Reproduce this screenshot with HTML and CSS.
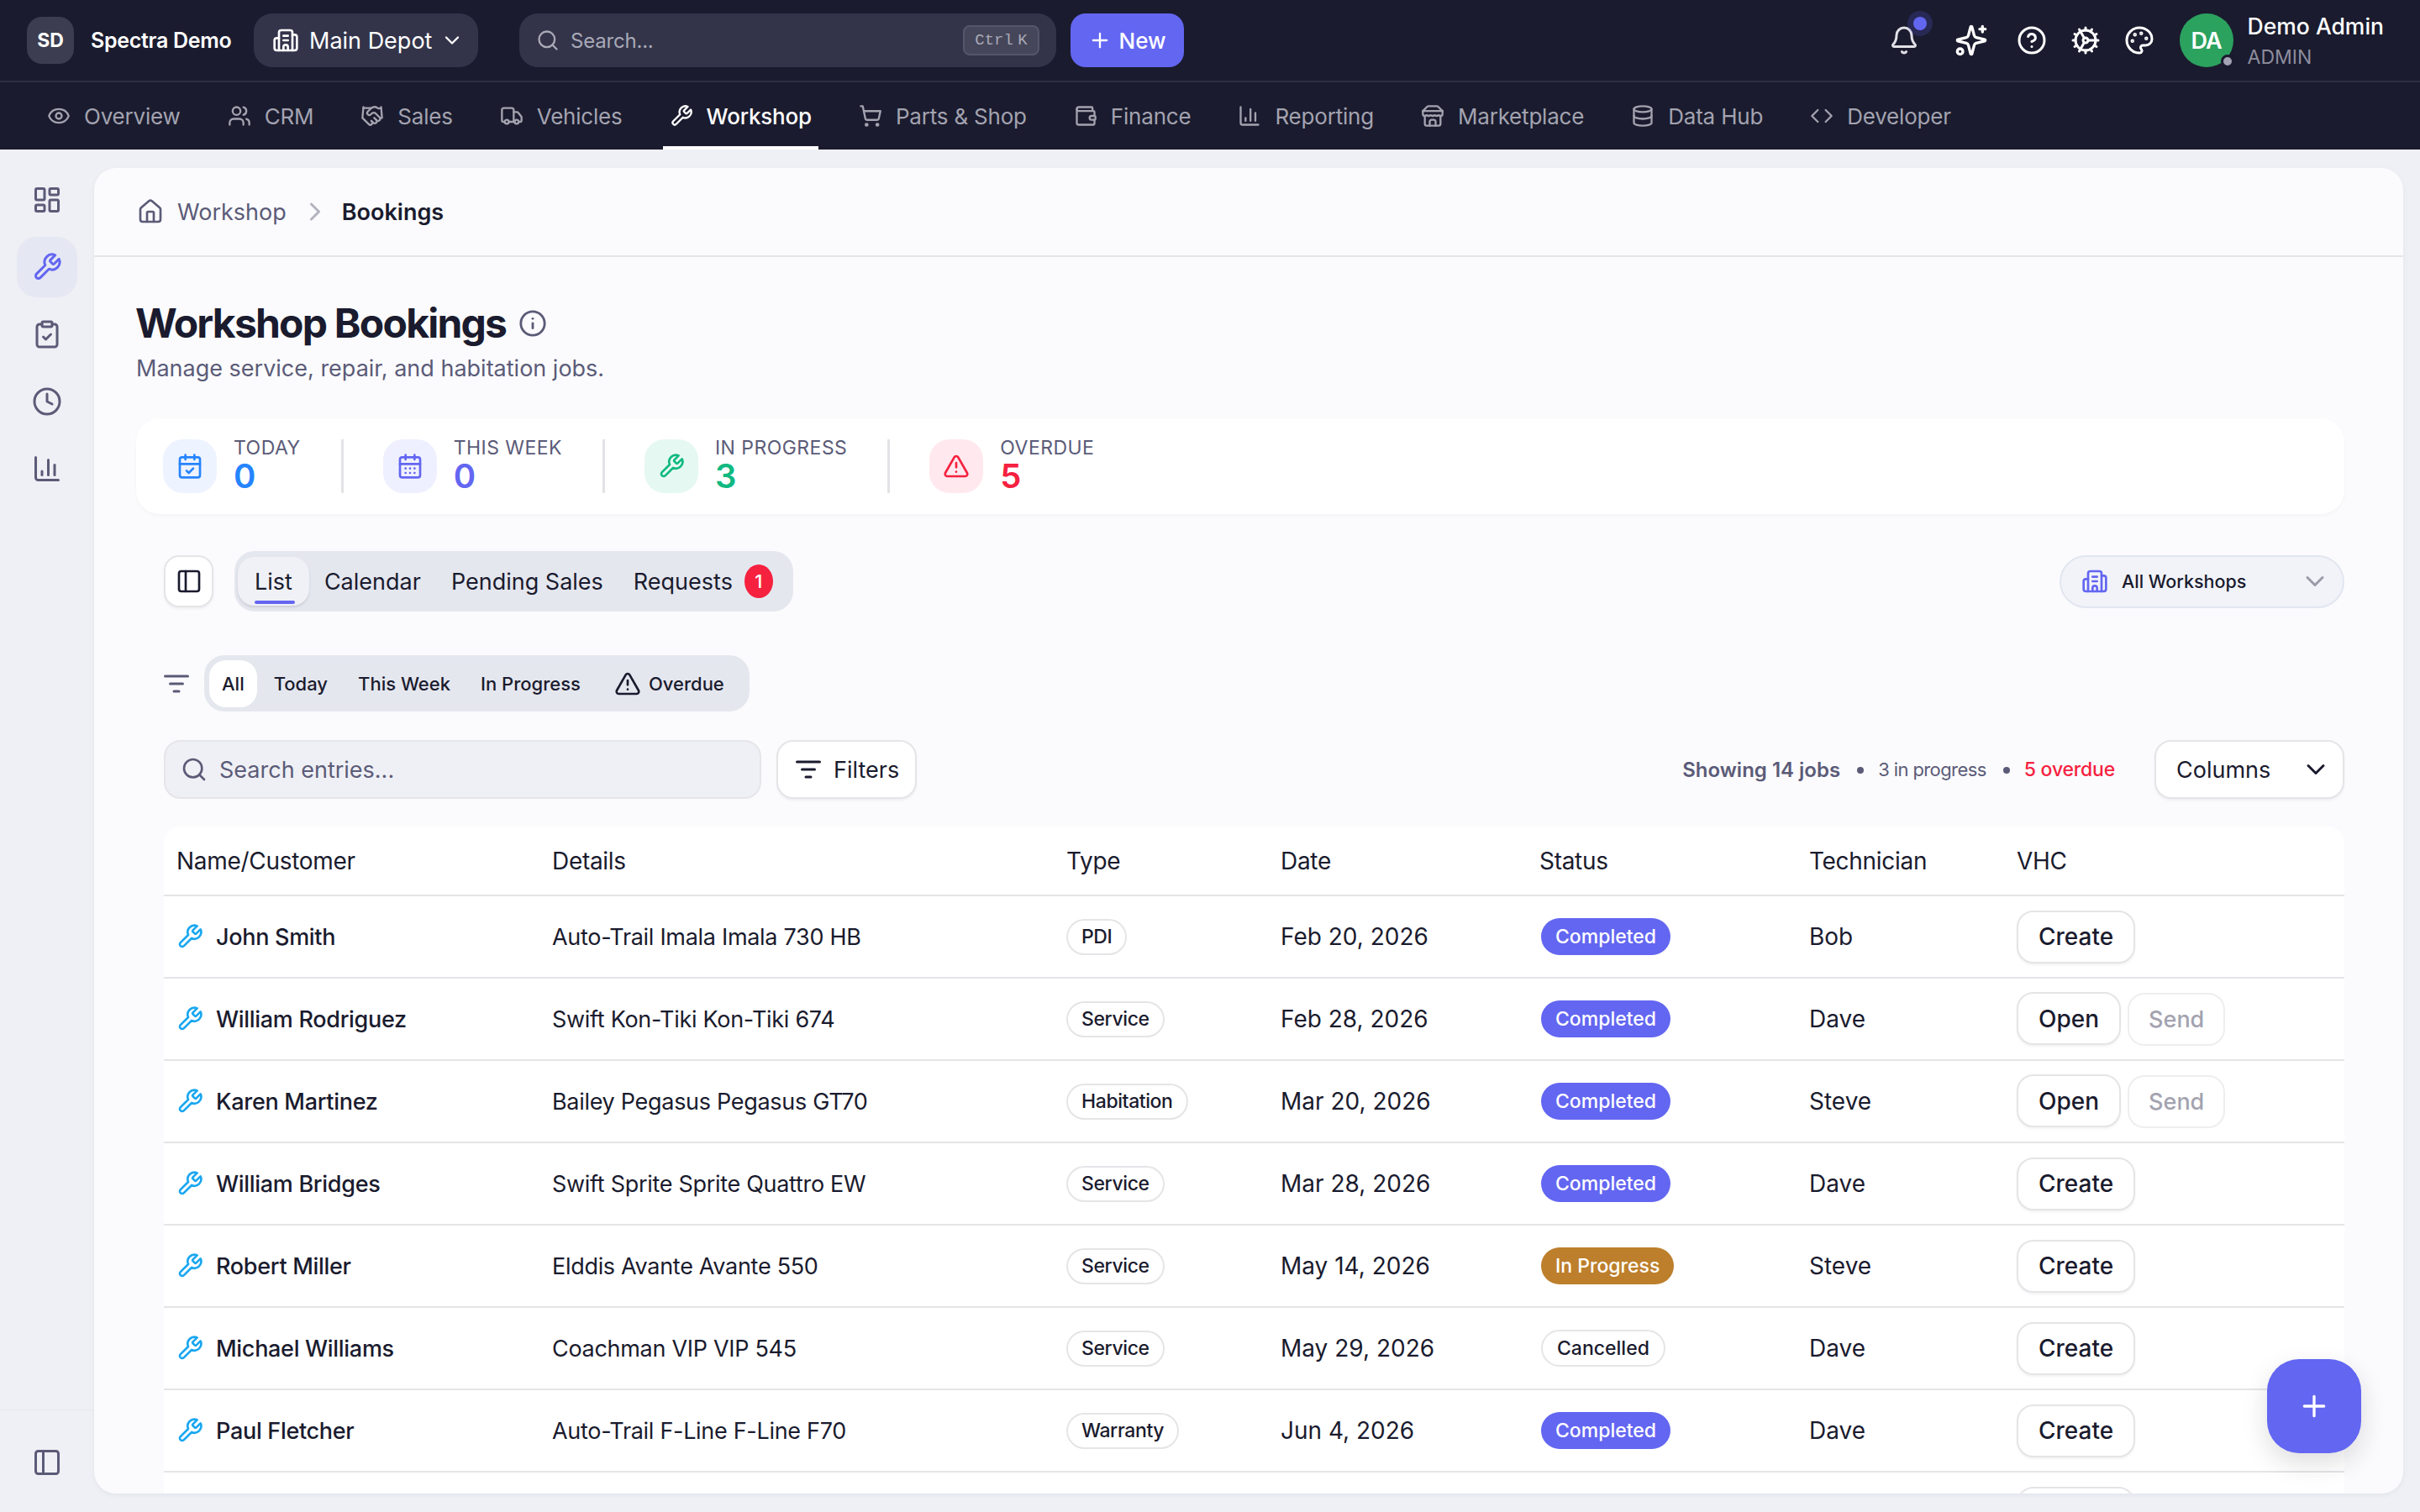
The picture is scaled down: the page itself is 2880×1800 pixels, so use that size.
FILE: index.html
```html
<!DOCTYPE html>
<html lang="en">

<head>
	<meta charset="UTF-8">
	<title>Workshop Bookings</title>
	<link rel="stylesheet" href="styles.css">
</head>

<body>
	<!-- Icon set -->
	<svg class="sprite" xmlns="http://www.w3.org/2000/svg">
		<symbol id="i-eye" viewBox="0 0 24 24"><path d="M2.062 12.348a1 1 0 0 1 0-.696 10.75 10.75 0 0 1 19.876 0 1 1 0 0 1 0 .696 10.75 10.75 0 0 1-19.876 0"/><circle cx="12" cy="12" r="3"/></symbol>
		<symbol id="i-users" viewBox="0 0 24 24"><path d="M16 21v-2a4 4 0 0 0-4-4H6a4 4 0 0 0-4 4v2"/><circle cx="9" cy="7" r="4"/><path d="M22 21v-2a4 4 0 0 0-3-3.87"/><path d="M16 3.13a4 4 0 0 1 0 7.75"/></symbol>
		<symbol id="i-handshake" viewBox="0 0 24 24"><path d="m11 17 2 2a1 1 0 1 0 3-3"/><path d="m14 14 2.5 2.5a1 1 0 1 0 3-3l-3.88-3.88a3 3 0 0 0-4.24 0l-.88.88a1 1 0 1 1-3-3l2.81-2.81a5.79 5.79 0 0 1 7.06-.87l.47.28a2 2 0 0 0 1.42.25L21 4"/><path d="m21 3 1 11h-2"/><path d="M3 3 2 14l6.5 6.5a1 1 0 1 0 3-3"/><path d="M3 4h8"/></symbol>
		<symbol id="i-truck" viewBox="0 0 24 24"><path d="M14 18V6a2 2 0 0 0-2-2H4a2 2 0 0 0-2 2v11a1 1 0 0 0 1 1h2"/><path d="M15 18H9"/><path d="M19 18h2a1 1 0 0 0 1-1v-3.65a1 1 0 0 0-.22-.624l-3.48-4.35A1 1 0 0 0 17.52 8H14"/><circle cx="17" cy="18" r="2"/><circle cx="7" cy="18" r="2"/></symbol>
		<symbol id="i-wrench" viewBox="0 0 24 24"><path d="M14.7 6.3a1 1 0 0 0 0 1.4l1.6 1.6a1 1 0 0 0 1.4 0l3.77-3.77a6 6 0 0 1-7.94 7.94l-6.91 6.91a2.12 2.12 0 0 1-3-3l6.91-6.91a6 6 0 0 1 7.94-7.94l-3.76 3.76z"/></symbol>
		<symbol id="i-cart" viewBox="0 0 24 24"><circle cx="8" cy="21" r="1"/><circle cx="19" cy="21" r="1"/><path d="M2.05 2.05h2l2.66 12.42a2 2 0 0 0 2 1.58h9.78a2 2 0 0 0 1.95-1.57l1.65-7.43H5.12"/></symbol>
		<symbol id="i-wallet" viewBox="0 0 24 24"><path d="M19 7V4a1 1 0 0 0-1-1H5a2 2 0 0 0 0 4h15a1 1 0 0 1 1 1v4h-3a2 2 0 0 0 0 4h3a1 1 0 0 0 1-1v-2a1 1 0 0 0-1-1"/><path d="M3 5v14a2 2 0 0 0 2 2h15a1 1 0 0 0 1-1v-4"/></symbol>
		<symbol id="i-chart" viewBox="0 0 24 24"><path d="M3 3v16a2 2 0 0 0 2 2h16"/><path d="M18 17V9"/><path d="M13 17V5"/><path d="M8 17v-3"/></symbol>
		<symbol id="i-store" viewBox="0 0 24 24"><path d="m2 7 4.41-4.41A2 2 0 0 1 7.83 2h8.34a2 2 0 0 1 1.42.59L22 7"/><path d="M4 12v8a2 2 0 0 0 2 2h12a2 2 0 0 0 2-2v-8"/><path d="M15 22v-4a2 2 0 0 0-2-2h-2a2 2 0 0 0-2 2v4"/><path d="M2 7h20"/><path d="M22 7v3a2 2 0 0 1-2 2a2.7 2.7 0 0 1-1.59-.63.7.7 0 0 0-.82 0A2.7 2.7 0 0 1 16 12a2.7 2.7 0 0 1-1.59-.63.7.7 0 0 0-.82 0A2.7 2.7 0 0 1 12 12a2.7 2.7 0 0 1-1.59-.63.7.7 0 0 0-.82 0A2.7 2.7 0 0 1 8 12a2.7 2.7 0 0 1-1.59-.63.7.7 0 0 0-.82 0A2.7 2.7 0 0 1 4 12a2 2 0 0 1-2-2V7"/></symbol>
		<symbol id="i-database" viewBox="0 0 24 24"><ellipse cx="12" cy="5" rx="9" ry="3"/><path d="M3 5V19A9 3 0 0 0 21 19V5"/><path d="M3 12A9 3 0 0 0 21 12"/></symbol>
		<symbol id="i-code" viewBox="0 0 24 24"><path d="m16 18 6-6-6-6"/><path d="m8 6-6 6 6 6"/></symbol>
		<symbol id="i-building" viewBox="0 0 24 24"><path d="M10 12h4"/><path d="M10 8h4"/><path d="M14 21v-3a2 2 0 0 0-4 0v3"/><path d="M6 10H4a2 2 0 0 0-2 2v7a2 2 0 0 0 2 2h16a2 2 0 0 0 2-2V9a2 2 0 0 0-2-2h-2"/><path d="M6 21V5a2 2 0 0 1 2-2h8a2 2 0 0 1 2 2v16"/></symbol>
		<symbol id="i-search" viewBox="0 0 24 24"><circle cx="11" cy="11" r="8"/><path d="m21 21-4.3-4.3"/></symbol>
		<symbol id="i-chevron-down" viewBox="0 0 24 24"><path d="m6 9 6 6 6-6"/></symbol>
		<symbol id="i-chevron-right" viewBox="0 0 24 24"><path d="m9 18 6-6-6-6"/></symbol>
		<symbol id="i-plus" viewBox="0 0 24 24"><path d="M5 12h14"/><path d="M12 5v14"/></symbol>
		<symbol id="i-bell" viewBox="0 0 24 24"><path d="M10.268 21a2 2 0 0 0 3.464 0"/><path d="M3.262 15.326A1 1 0 0 0 4 17h16a1 1 0 0 0 .74-1.673C19.41 13.956 18 12.499 18 8A6 6 0 0 0 6 8c0 4.499-1.411 5.956-2.738 7.326"/></symbol>
		<symbol id="i-sparkle" viewBox="0 0 24 24"><path d="M9.937 15.5A2 2 0 0 0 8.5 14.063l-6.135-1.582a.5.5 0 0 1 0-.962L8.5 9.936A2 2 0 0 0 9.937 8.5l1.582-6.135a.5.5 0 0 1 .963 0L14.063 8.5A2 2 0 0 0 15.5 9.937l6.135 1.581a.5.5 0 0 1 0 .964L15.5 14.063a2 2 0 0 0-1.437 1.437l-1.582 6.135a.5.5 0 0 1-.963 0z"/><path d="M20 2v4"/><path d="M22 4h-4"/><circle cx="4" cy="20" r="2"/></symbol>
		<symbol id="i-help" viewBox="0 0 24 24"><circle cx="12" cy="12" r="10"/><path d="M9.09 9a3 3 0 0 1 5.83 1c0 2-3 3-3 3"/><path d="M12 17h.01"/></symbol>
		<symbol id="i-cog" viewBox="0 0 24 24"><path d="M12 20a8 8 0 1 0 0-16 8 8 0 0 0 0 16Z"/><path d="M12 14a2 2 0 1 0 0-4 2 2 0 0 0 0 4Z"/><path d="M12 2v2"/><path d="M12 22v-2"/><path d="m17 20.66-1-1.73"/><path d="M11 10.27 7 3.34"/><path d="m20.66 17-1.73-1"/><path d="m3.34 7 1.73 1"/><path d="M14 12h8"/><path d="M2 12h2"/><path d="m20.66 7-1.73 1"/><path d="m3.34 17 1.73-1"/><path d="m17 3.34-1 1.73"/><path d="m11 13.73-4 6.93"/></symbol>
		<symbol id="i-palette" viewBox="0 0 24 24"><path d="M12 22a1 1 0 0 1 0-20 10 9 0 0 1 10 9 5 5 0 0 1-5 5h-2.25a1.75 1.75 0 0 0-1.4 2.8l.3.4a1.75 1.75 0 0 1-1.4 2.8z"/><circle cx="13.5" cy="6.5" r=".5" fill="currentColor"/><circle cx="17.5" cy="10.5" r=".5" fill="currentColor"/><circle cx="6.5" cy="12.5" r=".5" fill="currentColor"/><circle cx="8.5" cy="7.5" r=".5" fill="currentColor"/></symbol>
		<symbol id="i-dashboard" viewBox="0 0 24 24"><rect width="7" height="9" x="3" y="3" rx="1"/><rect width="7" height="5" x="14" y="3" rx="1"/><rect width="7" height="9" x="14" y="12" rx="1"/><rect width="7" height="5" x="3" y="16" rx="1"/></symbol>
		<symbol id="i-clipboard" viewBox="0 0 24 24"><rect width="8" height="4" x="8" y="2" rx="1" ry="1"/><path d="M16 4h2a2 2 0 0 1 2 2v14a2 2 0 0 1-2 2H6a2 2 0 0 1-2-2V6a2 2 0 0 1 2-2h2"/><path d="m9 14 2 2 4-4"/></symbol>
		<symbol id="i-clock" viewBox="0 0 24 24"><circle cx="12" cy="12" r="10"/><path d="M12 6v6l4 2"/></symbol>
		<symbol id="i-panel" viewBox="0 0 24 24"><rect width="18" height="18" x="3" y="3" rx="2"/><path d="M9 3v18"/></symbol>
		<symbol id="i-home" viewBox="0 0 24 24"><path d="M15 21v-8a1 1 0 0 0-1-1h-4a1 1 0 0 0-1 1v8"/><path d="M3 10a2 2 0 0 1 .709-1.528l7-5.999a2 2 0 0 1 2.582 0l7 5.999A2 2 0 0 1 21 10v9a2 2 0 0 1-2 2H5a2 2 0 0 1-2-2z"/></symbol>
		<symbol id="i-info" viewBox="0 0 24 24"><circle cx="12" cy="12" r="10"/><path d="M12 16v-4"/><path d="M12 8h.01"/></symbol>
		<symbol id="i-cal-check" viewBox="0 0 24 24"><path d="M8 2v4"/><path d="M16 2v4"/><rect width="18" height="18" x="3" y="4" rx="2"/><path d="M3 10h18"/><path d="m9 16 2 2 4-4"/></symbol>
		<symbol id="i-cal-days" viewBox="0 0 24 24"><path d="M8 2v4"/><path d="M16 2v4"/><rect width="18" height="18" x="3" y="4" rx="2"/><path d="M3 10h18"/><path d="M8 14h.01"/><path d="M12 14h.01"/><path d="M16 14h.01"/><path d="M8 18h.01"/><path d="M12 18h.01"/><path d="M16 18h.01"/></symbol>
		<symbol id="i-alert" viewBox="0 0 24 24"><path d="m21.73 18-8-14a2 2 0 0 0-3.48 0l-8 14A2 2 0 0 0 4 21h16a2 2 0 0 0 1.73-3"/><path d="M12 9v4"/><path d="M12 17h.01"/></symbol>
		<symbol id="i-filter" viewBox="0 0 24 24"><path d="M3 6h18"/><path d="M7 12h10"/><path d="M10 18h4"/></symbol>
	</svg>

	<!-- Top bar -->
	<header class="topbar">
		<div class="org-badge">SD</div>
		<span class="org-name">Spectra Demo</span>
		<button class="depot">
			<svg class="icon icon-32"><use href="#i-building"/></svg>
			<span>Main Depot</span>
			<svg class="icon icon-28"><use href="#i-chevron-down"/></svg>
		</button>
		<div class="top-search">
			<svg class="icon icon-28"><use href="#i-search"/></svg>
			<span class="top-search-text">Search...</span>
			<kbd class="kbd">Ctrl K</kbd>
		</div>
		<button class="new-btn">
			<svg class="icon icon-28"><use href="#i-plus"/></svg>
			<span>New</span>
		</button>

		<div class="top-right">
			<span class="bell">
				<svg class="icon icon-36"><use href="#i-bell"/></svg>
				<span class="bell-dot"></span>
			</span>
			<svg class="icon icon-40 spark"><use href="#i-sparkle"/></svg>
			<svg class="icon icon-36 help"><use href="#i-help"/></svg>
			<svg class="icon icon-36"><use href="#i-cog"/></svg>
			<svg class="icon icon-36"><use href="#i-palette"/></svg>
			<div class="avatar">DA<span class="avatar-status"></span></div>
			<div class="user">
				<div class="user-name">Demo Admin</div>
				<div class="user-role">ADMIN</div>
			</div>
		</div>
	</header>

	<!-- Module nav -->
	<nav class="modnav">
		<a class="modnav-item"><svg class="icon icon-28"><use href="#i-eye"/></svg>Overview</a>
		<a class="modnav-item"><svg class="icon icon-28"><use href="#i-users"/></svg>CRM</a>
		<a class="modnav-item"><svg class="icon icon-28"><use href="#i-handshake"/></svg>Sales</a>
		<a class="modnav-item"><svg class="icon icon-28"><use href="#i-truck"/></svg>Vehicles</a>
		<a class="modnav-item active"><svg class="icon icon-28"><use href="#i-wrench"/></svg>Workshop</a>
		<a class="modnav-item"><svg class="icon icon-28"><use href="#i-cart"/></svg>Parts &amp; Shop</a>
		<a class="modnav-item"><svg class="icon icon-28"><use href="#i-wallet"/></svg>Finance</a>
		<a class="modnav-item"><svg class="icon icon-28"><use href="#i-chart"/></svg>Reporting</a>
		<a class="modnav-item"><svg class="icon icon-28"><use href="#i-store"/></svg>Marketplace</a>
		<a class="modnav-item"><svg class="icon icon-28"><use href="#i-database"/></svg>Data Hub</a>
		<a class="modnav-item"><svg class="icon icon-28"><use href="#i-code"/></svg>Developer</a>
	</nav>

	<div class="shell">
		<!-- Side rail -->
		<aside class="rail">
			<a class="rail-item"><svg class="icon icon-36"><use href="#i-dashboard"/></svg></a>
			<a class="rail-item active"><svg class="icon icon-36"><use href="#i-wrench"/></svg></a>
			<a class="rail-item"><svg class="icon icon-36"><use href="#i-clipboard"/></svg></a>
			<a class="rail-item"><svg class="icon icon-36"><use href="#i-clock"/></svg></a>
			<a class="rail-item"><svg class="icon icon-36"><use href="#i-chart"/></svg></a>
			<div class="rail-foot">
				<svg class="icon icon-36"><use href="#i-panel"/></svg>
			</div>
		</aside>

		<main class="page">
			<div class="crumbs">
				<svg class="icon icon-32 crumb-home"><use href="#i-home"/></svg>
				<span class="crumb-link">Workshop</span>
				<svg class="icon icon-36 crumb-sep"><use href="#i-chevron-right"/></svg>
				<span class="crumb-current">Bookings</span>
			</div>

			<div class="content">
				<div class="title-row">
					<h1>Workshop Bookings</h1>
					<svg class="icon icon-34 title-info"><use href="#i-info"/></svg>
				</div>
				<p class="subtitle">Manage service, repair, and habitation jobs.</p>

				<section class="stats">
					<div class="stat">
						<div class="stat-icon blue"><svg class="icon icon-32"><use href="#i-cal-check"/></svg></div>
						<div class="stat-text">
							<div class="stat-label">Today</div>
							<div class="stat-value blue-text">0</div>
						</div>
					</div>
					<div class="stat">
						<div class="stat-icon indigo"><svg class="icon icon-32"><use href="#i-cal-days"/></svg></div>
						<div class="stat-text">
							<div class="stat-label">This Week</div>
							<div class="stat-value indigo-text">0</div>
						</div>
					</div>
					<div class="stat">
						<div class="stat-icon green"><svg class="icon icon-32"><use href="#i-wrench"/></svg></div>
						<div class="stat-text">
							<div class="stat-label">In Progress</div>
							<div class="stat-value green-text">3</div>
						</div>
					</div>
					<div class="stat">
						<div class="stat-icon red"><svg class="icon icon-32"><use href="#i-alert"/></svg></div>
						<div class="stat-text">
							<div class="stat-label">Overdue</div>
							<div class="stat-value red-text">5</div>
						</div>
					</div>
				</section>

				<div class="bookings">
					<div class="tabs-row">
						<button class="panel-btn"><svg class="icon icon-32"><use href="#i-panel"/></svg></button>
						<div class="tabs">
							<a class="tab active">List</a>
							<a class="tab">Calendar</a>
							<a class="tab">Pending Sales</a>
							<a class="tab">Requests<span class="tab-badge">1</span></a>
						</div>
						<button class="workshop-select">
							<svg class="icon icon-32"><use href="#i-building"/></svg>
							<span>All Workshops</span>
							<svg class="icon icon-36"><use href="#i-chevron-down"/></svg>
						</button>
					</div>

					<div class="quick-row">
						<svg class="icon icon-36 quick-icon"><use href="#i-filter"/></svg>
						<div class="quick">
							<a class="quick-item active">All</a>
							<a class="quick-item">Today</a>
							<a class="quick-item">This Week</a>
							<a class="quick-item">In Progress</a>
							<a class="quick-item quick-overdue"><svg class="icon icon-32"><use href="#i-alert"/></svg>Overdue</a>
						</div>
					</div>

					<div class="tools-row">
						<div class="entry-search">
							<svg class="icon icon-32"><use href="#i-search"/></svg>
							<span>Search entries...</span>
						</div>
						<button class="white-btn filters-btn"><svg class="icon icon-36"><use href="#i-filter"/></svg>Filters</button>
						<div class="summary">
							<span class="summary-main">Showing 14 jobs</span>
							<span class="summary-dot"></span>
							<span class="summary-sub">3 in progress</span>
							<span class="summary-dot"></span>
							<span class="summary-red">5 overdue</span>
						</div>
						<button class="white-btn columns-btn">Columns<svg class="icon icon-36"><use href="#i-chevron-down"/></svg></button>
					</div>

					<table class="jobs">
						<colgroup>
							<col class="col-name">
							<col class="col-details">
							<col class="col-type">
							<col class="col-date">
							<col class="col-status">
							<col class="col-tech">
							<col>
						</colgroup>
						<thead>
							<tr>
								<th>Name/Customer</th>
								<th>Details</th>
								<th>Type</th>
								<th>Date</th>
								<th>Status</th>
								<th>Technician</th>
								<th>VHC</th>
							</tr>
						</thead>
						<tbody>
							<tr>
								<td><div class="job-name"><svg class="icon icon-32"><use href="#i-wrench"/></svg>John Smith</div></td>
								<td class="job-details">Auto-Trail Imala Imala 730 HB</td>
								<td><span class="type-pill">PDI</span></td>
								<td>Feb 20, 2026</td>
								<td><span class="status completed">Completed</span></td>
								<td>Bob</td>
								<td><button class="vhc-btn">Create</button></td>
							</tr>
							<tr>
								<td><div class="job-name"><svg class="icon icon-32"><use href="#i-wrench"/></svg>William Rodriguez</div></td>
								<td class="job-details">Swift Kon-Tiki Kon-Tiki 674</td>
								<td><span class="type-pill">Service</span></td>
								<td>Feb 28, 2026</td>
								<td><span class="status completed">Completed</span></td>
								<td>Dave</td>
								<td><button class="vhc-btn">Open</button><button class="vhc-btn send">Send</button></td>
							</tr>
							<tr>
								<td><div class="job-name"><svg class="icon icon-32"><use href="#i-wrench"/></svg>Karen Martinez</div></td>
								<td class="job-details">Bailey Pegasus Pegasus GT70</td>
								<td><span class="type-pill">Habitation</span></td>
								<td>Mar 20, 2026</td>
								<td><span class="status completed">Completed</span></td>
								<td>Steve</td>
								<td><button class="vhc-btn">Open</button><button class="vhc-btn send">Send</button></td>
							</tr>
							<tr>
								<td><div class="job-name"><svg class="icon icon-32"><use href="#i-wrench"/></svg>William Bridges</div></td>
								<td class="job-details">Swift Sprite Sprite Quattro EW</td>
								<td><span class="type-pill">Service</span></td>
								<td>Mar 28, 2026</td>
								<td><span class="status completed">Completed</span></td>
								<td>Dave</td>
								<td><button class="vhc-btn">Create</button></td>
							</tr>
							<tr>
								<td><div class="job-name"><svg class="icon icon-32"><use href="#i-wrench"/></svg>Robert Miller</div></td>
								<td class="job-details">Elddis Avante Avante 550</td>
								<td><span class="type-pill">Service</span></td>
								<td>May 14, 2026</td>
								<td><span class="status progress">In Progress</span></td>
								<td>Steve</td>
								<td><button class="vhc-btn">Create</button></td>
							</tr>
							<tr>
								<td><div class="job-name"><svg class="icon icon-32"><use href="#i-wrench"/></svg>Michael Williams</div></td>
								<td class="job-details">Coachman VIP VIP 545</td>
								<td><span class="type-pill">Service</span></td>
								<td>May 29, 2026</td>
								<td><span class="status cancelled">Cancelled</span></td>
								<td>Dave</td>
								<td><button class="vhc-btn">Create</button></td>
							</tr>
							<tr>
								<td><div class="job-name"><svg class="icon icon-32"><use href="#i-wrench"/></svg>Paul Fletcher</div></td>
								<td class="job-details">Auto-Trail F-Line F-Line F70</td>
								<td><span class="type-pill">Warranty</span></td>
								<td>Jun 4, 2026</td>
								<td><span class="status completed">Completed</span></td>
								<td>Dave</td>
								<td><button class="vhc-btn">Create</button></td>
							</tr>
							<tr>
								<td></td><td></td><td></td><td></td><td></td><td></td>
								<td><button class="vhc-btn">Create</button></td>
							</tr>
						</tbody>
					</table>
				</div>
			</div>

			<button class="fab"><svg class="icon icon-40"><use href="#i-plus"/></svg></button>
		</main>
	</div>
</body>

</html>
```

FILE: styles.css
```css
* {
	box-sizing: border-box;
}

body {
	font-family: Inter, sans-serif;
	background-color: #eff0f5;
	color: #1a1b2e;
	margin: 0;
	padding: 0;
	height: 100vh;
	display: flex;
	flex-direction: column;
	overflow: hidden;
}

button {
	font-family: Inter, sans-serif;
	border: none;
	cursor: pointer;
}

.sprite {
	display: none;
}

.icon {
	fill: none;
	stroke: currentColor;
	stroke-width: 2;
	stroke-linecap: round;
	stroke-linejoin: round;
	flex-shrink: 0;
	display: block;
}

.icon-28 { width: 28px; height: 28px; }
.icon-32 { width: 32px; height: 32px; }
.icon-34 { width: 34px; height: 34px; }
.icon-36 { width: 36px; height: 36px; }
.icon-40 { width: 40px; height: 40px; }

/* Top bar */
.topbar {
	height: 98px;
	flex-shrink: 0;
	background-color: #1a1b2e;
	border-bottom: 2px solid #2e2f42;
	display: flex;
	align-items: center;
	padding: 0 43px 0 32px;
	color: white;
}

.org-badge {
	width: 56px;
	height: 56px;
	border-radius: 18px;
	background-color: #3c3d50;
	display: flex;
	align-items: center;
	justify-content: center;
	font-size: 23px;
	font-weight: 700;
}

.org-name {
	margin-left: 20px;
	width: 194px;
	font-size: 25px;
	font-weight: 600;
	letter-spacing: -0.3px;
	white-space: nowrap;
}

.depot {
	width: 267px;
	height: 64px;
	flex-shrink: 0;
	border-radius: 22px;
	background-color: #33344a;
	color: white;
	display: flex;
	align-items: center;
	padding: 0 0 0 22px;
	font-size: 27px;
}

.depot span {
	margin: 0 10px 0 12px;
}

.top-search {
	margin-left: 49px;
	width: 639px;
	height: 64px;
	flex-shrink: 0;
	border-radius: 22px;
	background-color: #33344a;
	display: flex;
	align-items: center;
	padding: 0 20px 0 20px;
	color: #a9a9b6;
	font-size: 24px;
}

.top-search-text {
	margin-left: 13px;
	flex: 1;
	letter-spacing: -0.2px;
}

.kbd {
	width: 91px;
	height: 36px;
	border: 2px solid #55566a;
	background-color: #45465a;
	border-radius: 8px;
	display: flex;
	align-items: center;
	justify-content: center;
	font-family: "Liberation Mono", monospace;
	font-size: 19px;
	word-spacing: -6px;
	color: #a9a9b6;
}

.new-btn {
	margin-left: 17px;
	width: 135px;
	height: 64px;
	flex-shrink: 0;
	border-radius: 18px;
	background-color: #6366f1;
	color: white;
	display: flex;
	align-items: center;
	justify-content: center;
	gap: 8px;
	font-size: 26px;
	font-weight: 500;
}

.top-right {
	margin-left: auto;
	display: flex;
	align-items: center;
	gap: 28px;
}

.bell {
	position: relative;
	color: #e0e0e6;
}

.bell-dot {
	position: absolute;
	top: -10px;
	right: -9px;
	width: 16px;
	height: 16px;
	border-radius: 50%;
	background-color: #6366f1;
	box-shadow: 0 0 0 7px rgba(99, 102, 241, 0.2);
}

.spark {
	margin-left: 14px;
}

.help {
	margin-left: 6px;
}

.avatar {
	position: relative;
	width: 64px;
	height: 64px;
	border-radius: 50%;
	background-color: #2ca25f;
	display: flex;
	align-items: center;
	justify-content: center;
	font-size: 27px;
	font-weight: 600;
	letter-spacing: -1px;
	margin-left: 2px;
}

.avatar-status {
	position: absolute;
	right: -1px;
	bottom: -1px;
	width: 16px;
	height: 16px;
	border-radius: 50%;
	background-color: #a3a3b5;
	border: 3px solid #1a1b2e;
}

.user {
	margin-left: -11px;
}

.user-name {
	font-size: 26.5px;
	font-weight: 500;
	line-height: 36px;
}

.user-role {
	margin-top: 3px;
	font-size: 23px;
	line-height: 32px;
	color: #8d8d9e;
}

/* Module nav */
.modnav {
	height: 80px;
	flex-shrink: 0;
	background-color: #1a1b2e;
	display: flex;
	padding-left: 48px;
	gap: 40px;
}

.modnav-item {
	display: flex;
	align-items: center;
	gap: 16px;
	padding: 0 8px;
	font-size: 26px;
	letter-spacing: -0.2px;
	color: #a3a3b0;
	position: relative;
}

.modnav-item.active {
	color: white;
	font-weight: 500;
}

.modnav-item.active::after {
	content: "";
	position: absolute;
	left: 0;
	right: 0;
	bottom: 0;
	height: 4px;
	background-color: white;
}

/* Shell */
.shell {
	flex: 1;
	display: flex;
	min-height: 0;
}

.rail {
	width: 112px;
	flex-shrink: 0;
	display: flex;
	flex-direction: column;
	align-items: center;
	gap: 8px;
	padding-top: 24px;
	color: #5b5b78;
}

.rail-item {
	width: 72px;
	height: 72px;
	border-radius: 24px;
	display: flex;
	align-items: center;
	justify-content: center;
}

.rail-item.active {
	background-color: #e5e7f2;
	color: #6366f1;
}

.rail-foot {
	margin-top: auto;
	width: 100%;
	height: 122px;
	border-top: 1px solid #e8e9ef;
	display: flex;
	justify-content: center;
	padding-top: 44px;
}

.page {
	flex: 1;
	position: relative;
	margin: 22px 20px 22px 0;
	background-color: #fbfbfd;
	border-radius: 26px;
	overflow: hidden;
	box-shadow: 0 2px 6px rgba(26, 27, 46, 0.05);
}

.crumbs {
	height: 106px;
	border-bottom: 2px solid #e5e5e8;
	display: flex;
	align-items: center;
	padding-left: 51px;
	font-size: 27px;
}

.crumb-home {
	color: #5b5b78;
}

.crumb-link {
	margin-left: 16px;
	color: #5b5b78;
}

.crumb-sep {
	margin: 0 14px 0 16px;
	color: #b4b4c0;
}

.crumb-current {
	font-weight: 600;
}

.content {
	padding: 49px 70px 0 50px;
}

.title-row {
	display: flex;
	align-items: center;
	gap: 15px;
}

h1 {
	margin: 0 0 0 -1px;
	font-size: 48px;
	line-height: 60px;
	font-weight: 700;
	letter-spacing: -0.037em;
}

.title-info {
	color: #5b5b78;
}

.subtitle {
	margin: 6px 0 0;
	font-size: 27px;
	line-height: 36px;
	color: #5b5b78;
}

/* Stat strip */
.stats {
	margin-top: 41px;
	height: 114px;
	background-color: white;
	border-radius: 28px;
	box-shadow: 0 2px 4px rgba(26, 27, 46, 0.03);
	display: flex;
	align-items: center;
	padding-left: 32px;
}

.stat {
	display: flex;
	align-items: center;
	gap: 20px;
	height: 64px;
	padding-right: 48px;
	margin-right: 47px;
	border-right: 3px solid #e3e3e6;
}

.stat:last-child {
	border-right: none;
}

.stat-icon {
	width: 64px;
	height: 64px;
	border-radius: 24px;
	display: flex;
	align-items: center;
	justify-content: center;
}

.stat-icon.blue { background-color: #edf3ff; color: #2684ff; }
.stat-icon.indigo { background-color: #eff0ff; color: #6366f1; }
.stat-icon.green { background-color: #e5f8f1; color: #10b981; }
.stat-icon.red { background-color: #ffe8ee; color: #f5213f; }

.stat-text {
	margin-top: -4px;
}

.stat-label {
	font-size: 23px;
	line-height: 28px;
	letter-spacing: 0.02em;
	text-transform: uppercase;
	color: #5b5b78;
}

.stat-value {
	font-size: 40px;
	line-height: 40px;
	font-weight: 600;
}

.blue-text { color: #2684ff; }
.indigo-text { color: #6366f1; }
.green-text { color: #10b981; }
.red-text { color: #f5213f; }

/* Bookings area */
.bookings {
	padding-left: 33px;
}

.tabs-row {
	margin-top: 44px;
	height: 72px;
	display: flex;
	align-items: center;
}

.panel-btn {
	width: 59px;
	height: 62px;
	background-color: white;
	border: 2px solid #e5e5e8;
	border-radius: 18px;
	box-shadow: 0 2px 3px rgba(26, 27, 46, 0.06);
	color: #1a1b2e;
	display: flex;
	align-items: center;
	justify-content: center;
	padding: 0;
}

.tabs {
	margin-left: 25px;
	height: 72px;
	background-color: #e5e7ef;
	border-radius: 24px;
	display: flex;
	align-items: center;
	padding: 0 24px 0 4px;
	font-size: 27px;
}

.tab {
	height: 58px;
	display: flex;
	align-items: center;
	padding: 0 18px;
	position: relative;
}

.tab.active {
	padding: 0 20px;
	background-color: #f0f1f6;
	border-radius: 20px;
	box-shadow: 0 2px 3px rgba(26, 27, 46, 0.12);
}

.tab.active::after {
	content: "";
	position: absolute;
	left: 20px;
	right: 17px;
	bottom: 2px;
	height: 4px;
	border-radius: 2px;
	background-color: #6366f1;
}

.tab-badge {
	margin-left: 14px;
	margin-right: -18px;
	width: 34px;
	height: 40px;
	border-radius: 50%;
	background-color: #f5213f;
	color: white;
	font-size: 22px;
	font-weight: 500;
	display: flex;
	align-items: center;
	justify-content: center;
}

.workshop-select {
	margin-left: auto;
	width: 339px;
	height: 63px;
	border-radius: 32px;
	background-color: #f1f3f8;
	border: 2px solid #e2e6f0;
	display: flex;
	align-items: center;
	padding: 0 23px 0 24px;
	font-size: 21.5px;
	font-weight: 500;
	color: #1a1b2e;
}

.workshop-select .icon:first-child {
	color: #6366f1;
}

.workshop-select .icon:last-child {
	margin-right: -8px;
	color: #9a9aa8;
}

.workshop-select span {
	margin-left: 16px;
	flex: 1;
	text-align: left;
}

.quick-row {
	margin-top: 52px;
	display: flex;
	align-items: center;
}

.quick-icon {
	margin-left: -3px;
	color: #5b5b78;
}

.quick {
	margin-left: 15px;
	height: 67px;
	background-color: #e5e7ef;
	border-radius: 24px;
	display: flex;
	align-items: center;
	padding: 0 12px 0 6px;
	font-size: 22px;
	font-weight: 500;
}

.quick-item {
	height: 56px;
	display: flex;
	align-items: center;
	gap: 9px;
	padding: 0 16px;
	margin-right: 4px;
}

.quick-item.active {
	padding: 0 15px;
	background-color: white;
	border-radius: 20px;
}

.quick-overdue {
	margin-left: 4px;
	margin-right: 2px;
}

.tools-row {
	margin-top: 34px;
	display: flex;
	align-items: center;
}

.entry-search {
	width: 711px;
	height: 70px;
	background-color: #eff0f5;
	border: 2px solid #e5e5ea;
	border-radius: 20px;
	display: flex;
	align-items: center;
	gap: 14px;
	padding-left: 18px;
	font-size: 27px;
	color: #5b5b78;
}

.white-btn {
	height: 70px;
	background-color: white;
	border: 2px solid #e5e5e8;
	border-radius: 20px;
	box-shadow: 0 2px 3px rgba(26, 27, 46, 0.05);
	display: flex;
	align-items: center;
	font-size: 27px;
	color: #1a1b2e;
}

.filters-btn {
	margin-left: 18px;
	width: 167px;
	gap: 12px;
	padding: 0 0 0 18px;
}

.summary {
	margin-left: auto;
	display: flex;
	align-items: center;
}

.summary-main {
	font-size: 24px;
	color: #5b5b78;
	font-weight: 600;
}

.summary-sub {
	font-size: 22px;
	letter-spacing: -0.6px;
	color: #5b5b78;
}

.summary-red {
	font-size: 23px;
	letter-spacing: -0.2px;
	color: #f5213f;
	font-weight: 500;
}

.summary-dot {
	width: 8px;
	height: 8px;
	margin: 2px 17px 0 20px;
	border-radius: 50%;
	background-color: #5b5b78;
}

.columns-btn {
	margin-left: 47px;
	width: 226px;
	justify-content: space-between;
	padding: 0 14px 0 24px;
}

/* Jobs table */
.jobs {
	margin-top: 33px;
	width: 100%;
	table-layout: fixed;
	border-collapse: separate;
	border-spacing: 0;
	background-color: white;
	border-radius: 20px 20px 0 0;
	font-size: 28px;
}

.col-name { width: 447px; }
.col-details { width: 612px; }
.col-type { width: 255px; }
.col-date { width: 308px; }
.col-status { width: 321px; }
.col-tech { width: 247px; }

.jobs th {
	height: 83px;
	padding: 0 15px;
	text-align: left;
	font-weight: 400;
	letter-spacing: -0.3px;
	border-bottom: 2px solid #e5e5e8;
}

.jobs td {
	height: 98px;
	padding: 0 15px;
	border-bottom: 2px solid #e5e5e8;
	white-space: nowrap;
}

.job-name {
	display: flex;
	align-items: center;
	gap: 15px;
	font-size: 27px;
	letter-spacing: -0.3px;
	font-weight: 500;
}

.job-name .icon {
	color: #1aa7f0;
}

.jobs .job-details {
	font-size: 27px;
	letter-spacing: -0.3px;
}

.type-pill {
	display: inline-block;
	height: 43px;
	line-height: 39px;
	padding: 0 16px;
	border: 2px solid #e5e5e8;
	border-radius: 22px;
	font-size: 23px;
	letter-spacing: -0.4px;
	font-weight: 500;
}

.status {
	display: inline-block;
	height: 44px;
	line-height: 44px;
	margin-left: 2px;
	padding: 0 17px;
	border-radius: 22px;
	font-size: 23px;
	font-weight: 500;
	color: white;
}

.status.completed { background-color: #6366f1; }
.status.progress { background-color: #bd7f2c; }

.status.cancelled {
	background-color: white;
	color: #1a1b2e;
	border: 2px solid #e5e5e8;
	line-height: 40px;
}

.vhc-btn {
	height: 63px;
	padding: 0 24px;
	background-color: white;
	border: 2px solid #e5e5e8;
	border-radius: 20px;
	box-shadow: 0 2px 3px rgba(26, 27, 46, 0.05);
	font-size: 28px;
	font-weight: 500;
	color: #1a1b2e;
}

.vhc-btn.send {
	margin-left: 8px;
	font-size: 27px;
	padding: 0 23px;
	color: #a3a3b0;
	box-shadow: none;
	border-color: #eeeef1;
}

.fab {
	position: absolute;
	right: 50px;
	bottom: 48px;
	width: 112px;
	height: 112px;
	border-radius: 38px;
	background-color: #6366f1;
	color: white;
	display: flex;
	align-items: center;
	justify-content: center;
	box-shadow: 0 12px 30px rgba(26, 27, 46, 0.14);
}
```
